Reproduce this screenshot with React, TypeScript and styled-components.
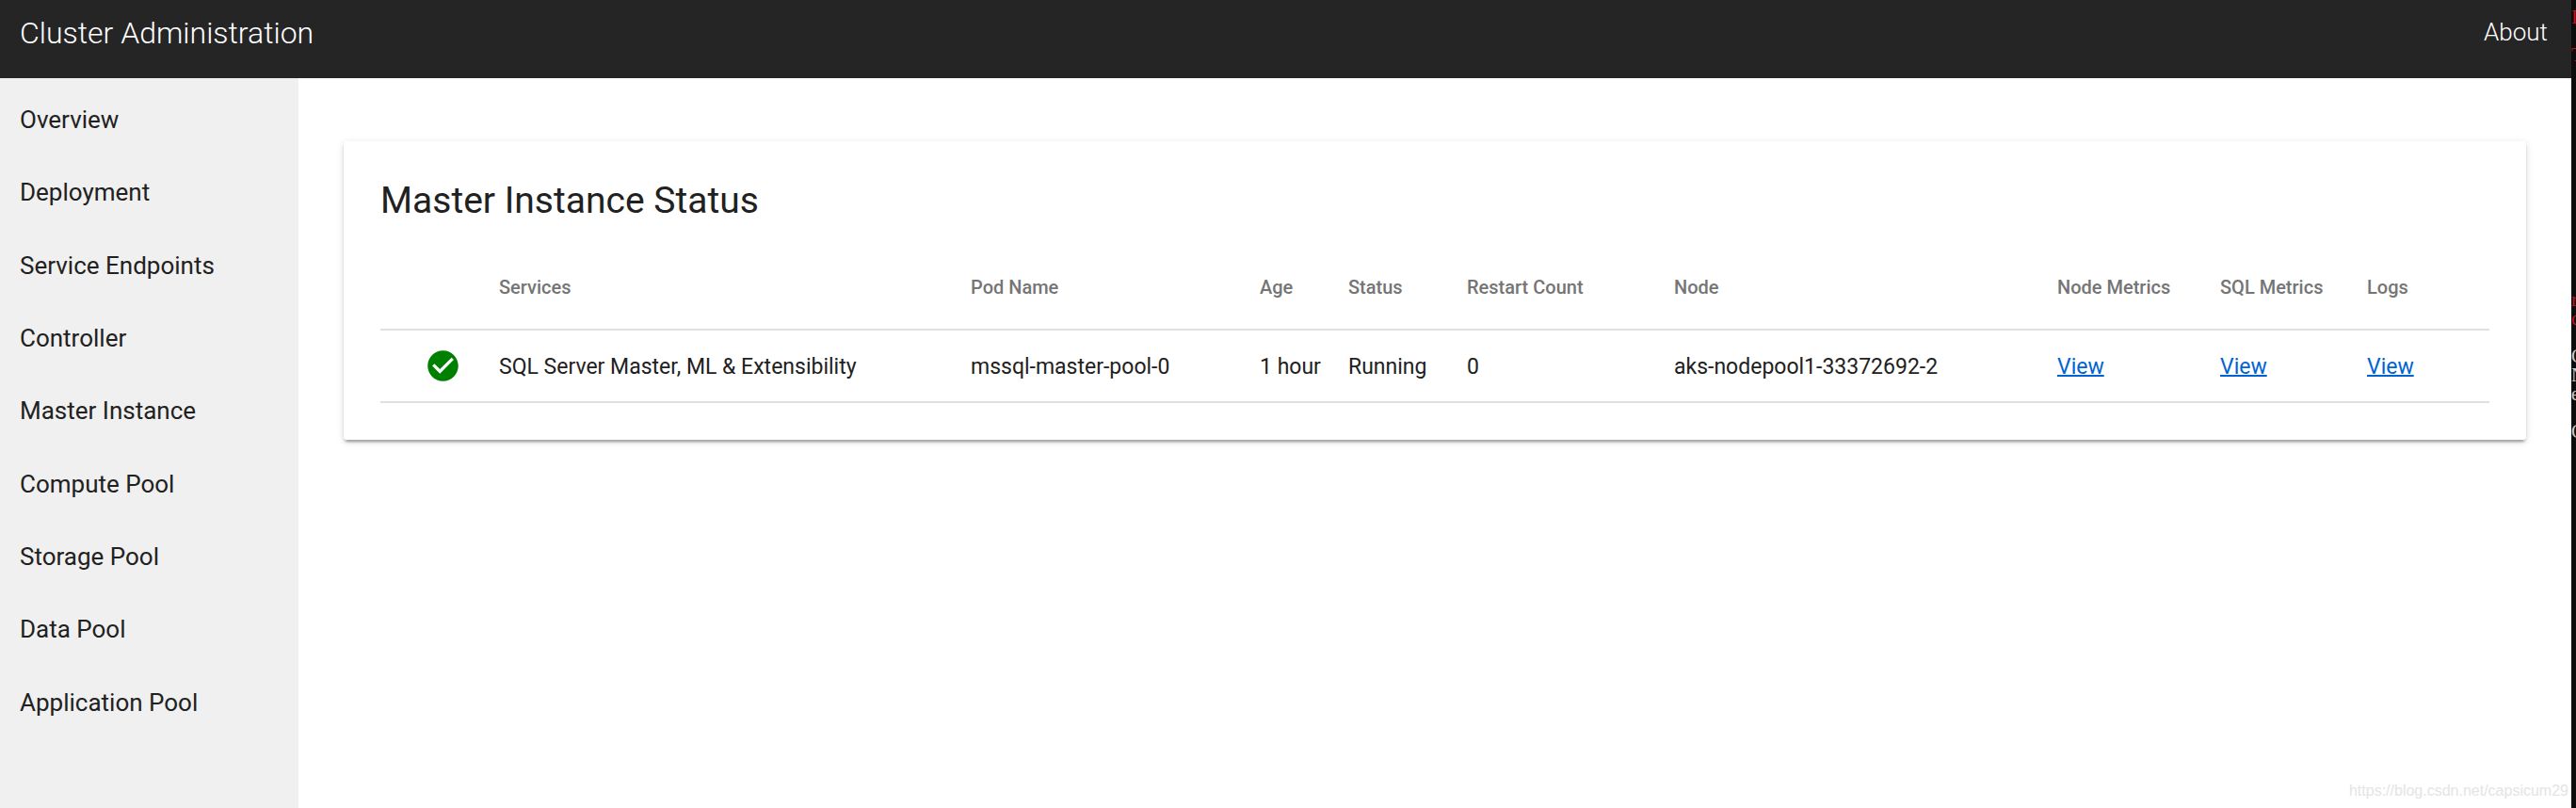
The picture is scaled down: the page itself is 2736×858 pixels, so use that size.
import React from 'react';
import styled, { createGlobalStyle } from 'styled-components';

const GlobalStyle = createGlobalStyle`
  *, *::before, *::after { box-sizing: border-box; }
  body {
    margin: 0;
    background: #ffffff;
    color: #212121;
    font-family: Roboto, "Liberation Sans", sans-serif;
  }
`;

const Desktop = styled.div`
  display: flex;
  min-height: 100vh;
`;

const Portal = styled.div`
  flex: 1;
  min-width: 0;
  display: flex;
  flex-direction: column;
`;

const TopBar = styled.header`
  display: flex;
  justify-content: space-between;
  align-items: flex-start;
  height: 83px;
  padding: 14px 25px 0 21px;
  background: #252525;
  color: #ffffff;
`;

const AppTitle = styled.h1`
  margin: 0;
  font-size: 32px;
  font-weight: 300;
  line-height: 42px;
`;

const AboutLink = styled.a`
  color: inherit;
  font-size: 26px;
  font-weight: 300;
  line-height: 40px;
  text-decoration: none;
`;

const Body = styled.div`
  flex: 1;
  display: flex;
`;

const SideNav = styled.nav`
  flex: none;
  width: 317px;
  padding: 6px 0;
  background: #f0f0f0;
`;

const NavList = styled.ul`
  display: grid;
  grid-auto-rows: 1fr;
  min-height: 696px;
  margin: 0;
  padding: 0;
  list-style: none;
`;

const NavLink = styled.a`
  display: block;
  padding: 0 21px;
  color: inherit;
  font-size: 26px;
  line-height: 77px;
  text-decoration: none;
`;

const Main = styled.main`
  flex: 1;
  min-width: 0;
  display: flex;
  flex-direction: column;
`;

const Card = styled.section`
  margin: 67px 48px 0;
  padding: 39px;
  border-radius: 3px;
  background: #ffffff;
  box-shadow:
    0 5px 2px -3px rgba(0, 0, 0, 0.2),
    0 3px 3px 0 rgba(0, 0, 0, 0.14),
    0 2px 8px 0 rgba(0, 0, 0, 0.12);
`;

const CardTitle = styled.h2`
  margin: 0 0 23px;
  font-size: 39px;
  font-weight: 400;
  line-height: 48px;
`;

const Table = styled.table`
  width: 100%;
  table-layout: fixed;
  border-collapse: separate;
  border-spacing: 0;
`;

const Column = styled.col<{ $share: number }>`
  width: ${({ $share }) => ($share / TOTAL_SHARE) * 100}%;
`;

const HeadCell = styled.th`
  height: 91px;
  padding: 0;
  border-bottom: 2px solid #e0e0e0;
  color: #757575;
  font-size: 20px;
  font-weight: 500;
  text-align: left;
  white-space: nowrap;
`;

const Cell = styled.td`
  height: 77px;
  padding: 2px 0 0;
  border-bottom: 2px solid #e0e0e0;
  font-size: 23px;
  white-space: nowrap;
`;

const StatusCell = styled(Cell)`
  padding: 0 0 0 47px;
`;

const CheckIcon = styled.svg`
  display: block;
  width: 39px;
  height: 39px;
  fill: #008000;
`;

const ViewLink = styled.a`
  color: #0063d1;
  text-decoration: underline;
  text-decoration-thickness: 2px;
`;

const SourceNote = styled.footer`
  margin: auto 3px 8px auto;
  color: #e4e4e4;
  font: 16px/20px "Liberation Sans", sans-serif;
`;

const ConsoleEdge = styled.aside`
  flex: none;
  width: 5px;
  padding-top: 8px;
  overflow: hidden;
  background: #0c0c0c;
  font: 20px/20px "Liberation Serif", serif;
`;

const ConsoleLine = styled.div<{ $error?: boolean }>`
  height: 20px;
  color: ${({ $error }) => ($error ? '#c50f1f' : '#cccccc')};
`;

const navItems = [
  'Overview',
  'Deployment',
  'Service Endpoints',
  'Controller',
  'Master Instance',
  'Compute Pool',
  'Storage Pool',
  'Data Pool',
  'Application Pool',
];

const columns = [
  { title: '', share: 126 },
  { title: 'Services', share: 501 },
  { title: 'Pod Name', share: 307 },
  { title: 'Age', share: 94 },
  { title: 'Status', share: 126 },
  { title: 'Restart Count', share: 220 },
  { title: 'Node', share: 407 },
  { title: 'Node Metrics', share: 173 },
  { title: 'SQL Metrics', share: 156 },
  { title: 'Logs', share: 130 },
];

const TOTAL_SHARE = columns.reduce((sum, column) => sum + column.share, 0);

const instances = [
  {
    service: 'SQL Server Master, ML & Extensibility',
    pod: 'mssql-master-pool-0',
    age: '1 hour',
    status: 'Running',
    restarts: 0,
    node: 'aks-nodepool1-33372692-2',
  },
];

const BLANK = { text: '', error: false };
const consoleLines = [
  { text: 'I', error: true },
  BLANK,
  { text: 'T', error: true },
  ...Array(12).fill(BLANK),
  { text: 'r', error: true },
  { text: 'c', error: true },
  BLANK,
  { text: 'C', error: false },
  { text: 'N', error: false },
  { text: 'e', error: false },
  BLANK,
  { text: 'C', error: false },
];

export default function App() {
  return (
    <Desktop>
      <GlobalStyle />
      <Portal>
        <TopBar>
          <AppTitle>Cluster Administration</AppTitle>
          <AboutLink href="#about">About</AboutLink>
        </TopBar>
        <Body>
          <SideNav aria-label="Cluster">
            <NavList>
              {navItems.map((item) => (
                <li key={item}>
                  <NavLink href={`#${item.toLowerCase().replace(' ', '-')}`}>{item}</NavLink>
                </li>
              ))}
            </NavList>
          </SideNav>
          <Main>
            <Card>
              <CardTitle>Master Instance Status</CardTitle>
              <Table>
                <colgroup>
                  {columns.map((column) => (
                    <Column key={column.title} $share={column.share} />
                  ))}
                </colgroup>
                <thead>
                  <tr>
                    {columns.map((column) => (
                      <HeadCell key={column.title} scope="col">
                        {column.title}
                      </HeadCell>
                    ))}
                  </tr>
                </thead>
                <tbody>
                  {instances.map((row) => (
                    <tr key={row.pod}>
                      <StatusCell>
                        <CheckIcon viewBox="0 0 24 24" role="img" aria-label="Healthy">
                          <path d="M12 2C6.48 2 2 6.48 2 12s4.48 10 10 10 10-4.48 10-10S17.52 2 12 2zm-2 15l-5-5 1.41-1.41L10 14.17l7.59-7.59L19 8l-9 9z" />
                        </CheckIcon>
                      </StatusCell>
                      <Cell>{row.service}</Cell>
                      <Cell>{row.pod}</Cell>
                      <Cell>{row.age}</Cell>
                      <Cell>{row.status}</Cell>
                      <Cell>{row.restarts}</Cell>
                      <Cell>{row.node}</Cell>
                      <Cell><ViewLink href="#node-metrics">View</ViewLink></Cell>
                      <Cell><ViewLink href="#sql-metrics">View</ViewLink></Cell>
                      <Cell><ViewLink href="#logs">View</ViewLink></Cell>
                    </tr>
                  ))}
                </tbody>
              </Table>
            </Card>
            <SourceNote>https://blog.csdn.net/capsicum29</SourceNote>
          </Main>
        </Body>
      </Portal>
      <ConsoleEdge aria-hidden="true">
        {consoleLines.map((line, index) => (
          <ConsoleLine key={index} $error={line.error}>
            {line.text}
          </ConsoleLine>
        ))}
      </ConsoleEdge>
    </Desktop>
  );
}
